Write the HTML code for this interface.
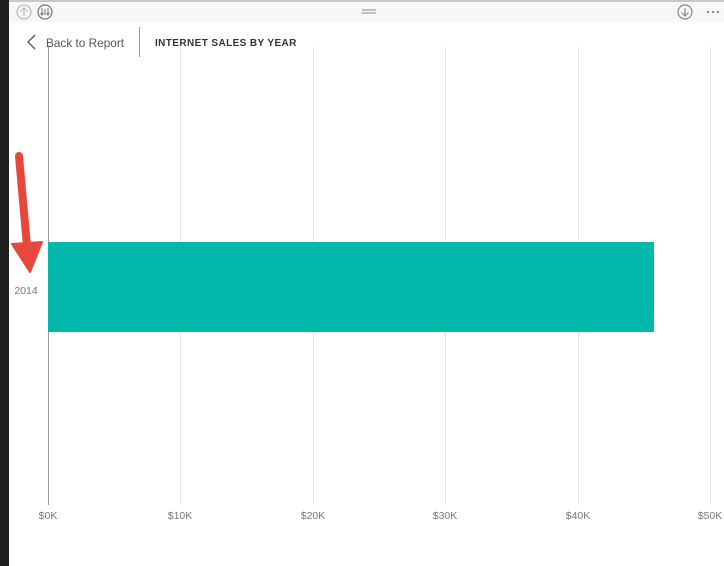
<!DOCTYPE html>
<html><head><meta charset="utf-8"><style>
*{margin:0;padding:0;box-sizing:border-box}
body{width:724px;height:566px;background:#fff;position:relative;overflow:hidden;font-family:"Liberation Sans",sans-serif}
.abs{position:absolute}
</style></head><body>
<div class="abs" style="left:0;top:0;width:9px;height:566px;background:#1e1e1e"></div>
<div class="abs" style="left:9px;top:0;width:715px;height:2px;background:#c8c8c8"></div>
<div class="abs" style="left:9px;top:2px;width:715px;height:20px;background:#f7f7f7"></div>
<svg class="abs" style="left:0;top:0" width="724" height="566">
 <circle cx="24" cy="12" r="7" fill="none" stroke="#bbb" stroke-width="1.2"/>
 <path d="M24 16V8M20.5 11.5L24 8L27.5 11.5" fill="none" stroke="#bbb" stroke-width="1.2"/>
 <circle cx="45" cy="12" r="7" fill="none" stroke="#777" stroke-width="1.2"/>
 <path d="M42 8v7M45 9v6M48 8v7M40.5 13l1.5 2 1.5-2M46.5 13l1.5 2 1.5-2" fill="none" stroke="#777" stroke-width="1"/>
 <path d="M362 10h14M362 13h14" stroke="#888" stroke-width="1"/>
 <circle cx="685" cy="12" r="7" fill="none" stroke="#888" stroke-width="1.2"/>
 <path d="M685 8v8M681.5 12.5L685 16L688.5 12.5" fill="none" stroke="#888" stroke-width="1.2"/>
 <circle cx="708" cy="12" r="1" fill="#666"/><circle cx="713" cy="12" r="1" fill="#666"/><circle cx="718" cy="12" r="1" fill="#666"/>
 <path d="M35 35L28 42L35 49" fill="none" stroke="#555" stroke-width="1.3"/>
 <path d="M139.5 27V57" stroke="#999" stroke-width="1"/>
 <g stroke="#e6e6e6" stroke-width="1">
  <path d="M180.5 47V505M313.5 47V505M445.5 47V505M578.5 47V505M710.5 47V505"/>
 </g>
 <path d="M48.5 47V505" stroke="#999" stroke-width="1"/>
 <rect x="48" y="242" width="606" height="90" fill="#01b8aa"/>
 <path d="M19 156L27 246" stroke="#e8473c" stroke-width="8" stroke-linecap="round"/>
 <path d="M12 244L42 242L30 272Z" fill="#e8473c" stroke="#e8473c" stroke-width="2" stroke-linejoin="round"/>
 <g font-family="Liberation Sans,sans-serif" font-size="10.5" fill="#777" text-anchor="middle">
  <text x="48" y="519">$0K</text><text x="180" y="519">$10K</text><text x="313" y="519">$20K</text>
  <text x="445" y="519">$30K</text><text x="578" y="519">$40K</text><text x="710" y="519">$50K</text>
  <text x="26" y="294">2014</text>
 </g>
 <text x="46" y="47" font-family="Liberation Sans,sans-serif" font-size="11.8" fill="#555">Back to Report</text>
 <text x="155" y="46" font-family="Liberation Sans,sans-serif" font-size="10" font-weight="bold" fill="#333" letter-spacing="0.4">INTERNET SALES BY YEAR</text>
</svg>
</body></html>
